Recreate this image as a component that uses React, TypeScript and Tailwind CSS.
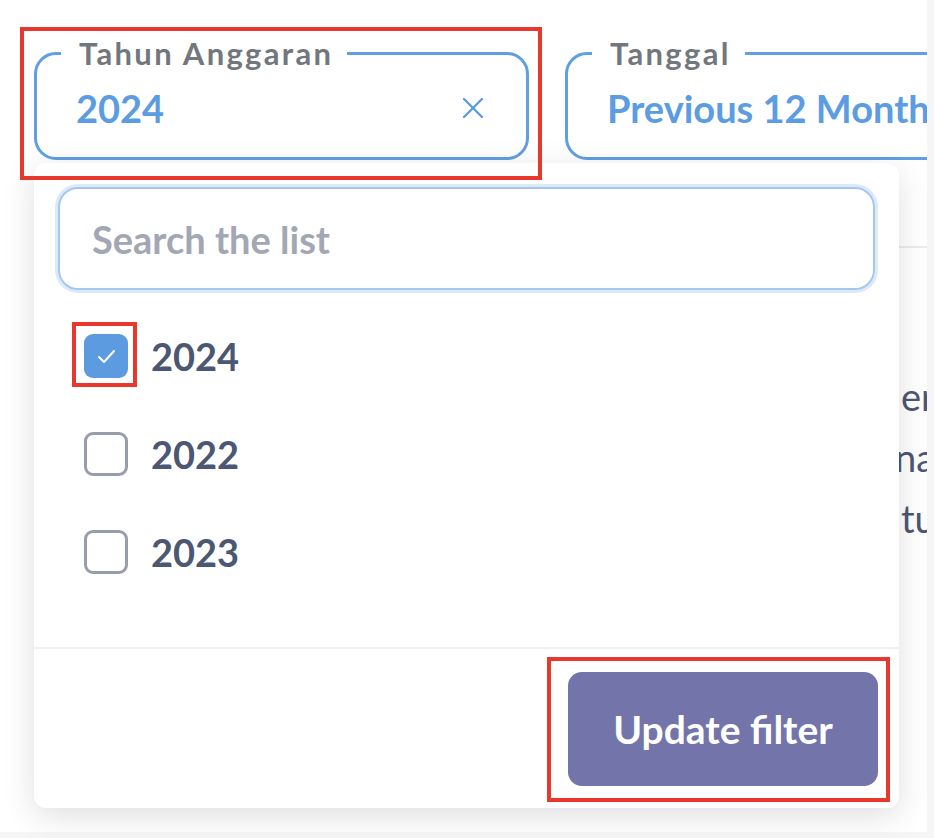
import React from 'react';

const years = [
  { label: '2024', checked: true },
  { label: '2022', checked: false },
  { label: '2023', checked: false },
];

const FilterField = ({ label, value, width, clearable }: { label: string; value: string; width: string; clearable?: boolean }) => (
  <fieldset className={`${width} shrink-0 rounded-[22px] border-[3px] border-[#5f9fe2] p-0`}>
    <legend className="ml-[24px] pl-[18px] pr-[14px] text-[31px] font-bold leading-[28px] tracking-[0.075em] text-[#72767d]">
      {label}
    </legend>
    <div className="flex h-[90px] items-center justify-between pb-[8px] pl-[39px] pr-[42px]">
      <span className="whitespace-nowrap text-[38px] font-bold leading-none text-[#5b9ce2]">{value}</span>
      {clearable && (
        <svg width="22" height="22" viewBox="0 0 22 22" className="shrink-0">
          <path d="M2 2 L20 20 M20 2 L2 20" stroke="#5b9ce2" strokeWidth="2.4" strokeLinecap="round" />
        </svg>
      )}
    </div>
  </fieldset>
);

const CheckBox = ({ checked }: { checked: boolean }) =>
  checked ? (
    <span className="flex h-[44px] w-[44px] shrink-0 items-center justify-center rounded-[9px] bg-[#5c9be0]">
      <svg width="44" height="44" viewBox="0 0 44 44">
        <path d="M15 23 L20 28 L30 17" fill="none" stroke="white" strokeWidth="2" strokeLinecap="round" strokeLinejoin="round" />
      </svg>
    </span>
  ) : (
    <span className="h-[44px] w-[44px] shrink-0 rounded-[9px] border-[3px] border-[#979dac] bg-white" />
  );

const App = () => {
  return (
    <div className="relative flex h-[838px] w-[934px] flex-col overflow-hidden bg-white font-['Lato','Noto_Sans',sans-serif]">
      <div className="flex min-h-0 flex-1">
        <div className="flex min-w-0 flex-1 flex-col overflow-hidden">
          <div className="flex gap-[36px] pl-[34px] pt-[39px]">
            <FilterField label="Tahun Anggaran" value="2024" width="w-[495px]" clearable />
            <FilterField label="Tanggal" value="Previous 12 Months" width="w-[500px]" />
          </div>
          <div className="ml-[600px] mt-[86px] h-[2px] bg-[#ececee]" />
          <div className="mt-[118px] flex flex-col whitespace-nowrap pl-[901px] text-[38px] leading-[61px] text-[#4c5773]">
            <span>er</span>
            <span className="-ml-[6px]">na</span>
            <span>tu</span>
          </div>
        </div>
        <div className="w-[7px] shrink-0 bg-[#f6f6f7]" />
      </div>
      <div className="h-[6px] shrink-0 bg-[#f6f6f7]" />

      {/* dropdown popover */}
      <div className="absolute left-[34px] top-[163px] flex h-[645px] w-[865px] flex-col rounded-[12px] bg-white shadow-[0_8px_32px_rgba(0,0,0,0.13)]">
        <div className="px-[24px] pt-[24px]">
          <input
            placeholder="Search the list"
            className="h-[103px] w-full rounded-[20px] border-2 border-[#a3c7ef] pl-[32px] text-[38px] font-bold text-[#4c5773] shadow-[0_0_0_3px_#dbe9f9] outline-none placeholder:text-[#a2a7b3]"
          />
        </div>
        <div className="flex flex-1 flex-col pt-[17px]">
          {years.map((y) => (
            <div key={y.label} className="flex h-[98px] items-center gap-[23px] pl-[50px]">
              <CheckBox checked={y.checked} />
              <span className="text-[38px] font-bold leading-none text-[#4c5773]">{y.label}</span>
            </div>
          ))}
        </div>
        <div className="h-[2px] bg-[#f0f0f2]" />
        <div className="flex justify-end pb-[22px] pr-[21px] pt-[23px]">
          <button className="h-[114px] w-[310px] rounded-[14px] bg-[#7374aa] text-[39px] font-bold text-white">
            Update filter
          </button>
        </div>
      </div>

      {/* annotation boxes */}
      <div className="absolute left-[20px] top-[27px] h-[153px] w-[522px] border-[4px] border-[#e8372c]" />
      <div className="absolute left-[72px] top-[322px] h-[65px] w-[65px] border-[4px] border-[#e8372c]" />
      <div className="absolute left-[547px] top-[657px] h-[145px] w-[343px] border-[4px] border-[#e8372c]" />
    </div>
  );
};

export default App;
